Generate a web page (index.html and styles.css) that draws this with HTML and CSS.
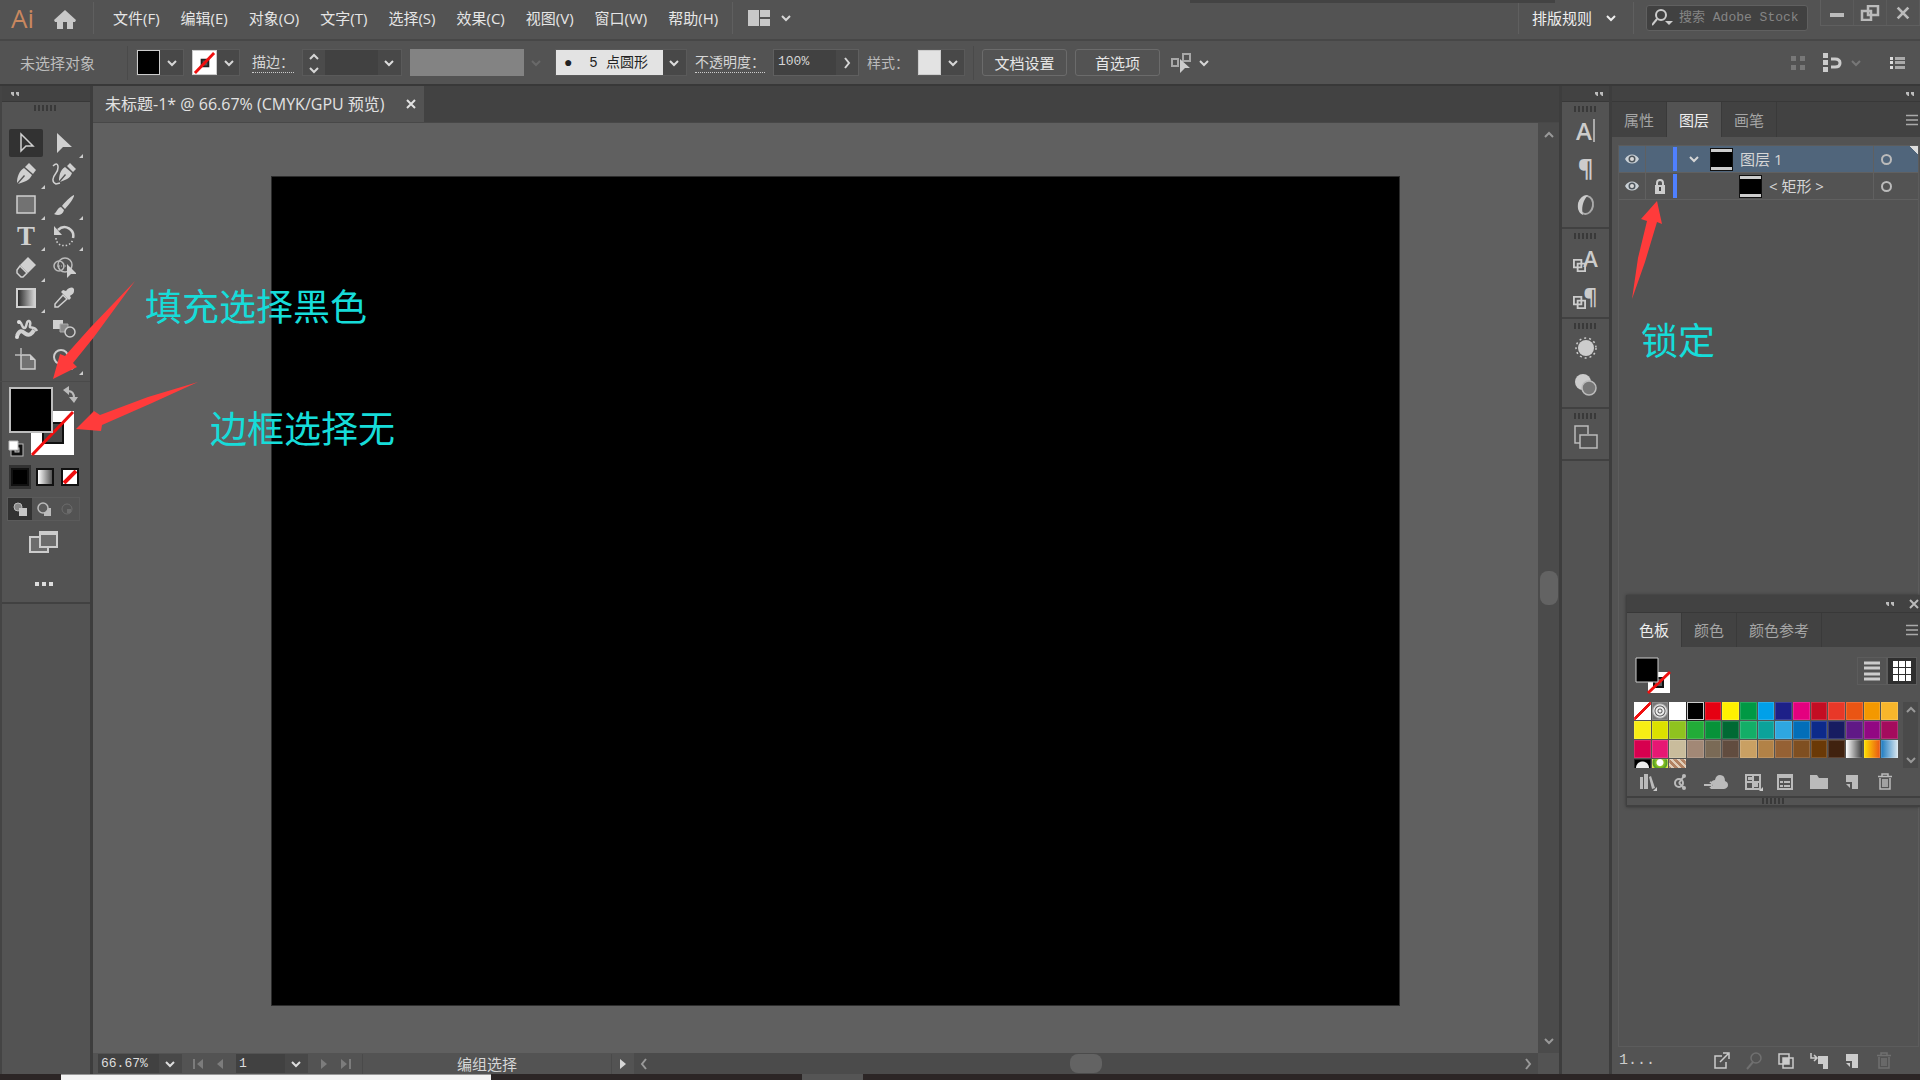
FILE: index.html
```html
<!DOCTYPE html>
<html lang="zh">
<head>
	<meta charset="UTF-8">
	<title>未标题-1</title>
	<link rel="stylesheet" href="styles.css">
</head>
<body>
	<svg class="defs" aria-hidden="true">
		<symbol id="down" viewBox="0 0 12 12"><path d="M2 4l4 4 4-4" fill="none" stroke="currentColor" stroke-width="2"/></symbol>
		<symbol id="up" viewBox="0 0 12 12"><path d="M2 8l4-4 4 4" fill="none" stroke="currentColor" stroke-width="2"/></symbol>
		<symbol id="right" viewBox="0 0 12 12"><path d="M4 1l4 5-4 5" fill="none" stroke="currentColor" stroke-width="2"/></symbol>
		<symbol id="left" viewBox="0 0 12 12"><path d="M8 1L4 6l4 5" fill="none" stroke="currentColor" stroke-width="2"/></symbol>
		<symbol id="close" viewBox="0 0 12 12"><path d="M2 2l8 8M10 2l-8 8" fill="none" stroke="currentColor" stroke-width="2"/></symbol>
		<symbol id="menu" viewBox="0 0 14 12"><path d="M1 1.500h12M1 6h12M1 10.500h12" fill="none" stroke="currentColor" stroke-width="1.500"/></symbol>
		<symbol id="grip" viewBox="0 0 24 6"><path d="M1 0v6M5 0v6M9 0v6M13 0v6M17 0v6M21 0v6" stroke="#393939" stroke-width="2"/></symbol>
		<symbol id="collapse" viewBox="0 0 8 6"><path d="M0 1h3v4H2L0 3zM5 1h3v4H7L5 3z" fill="currentColor"/></symbol>
		<symbol id="eye" viewBox="0 0 16 12"><path d="M1 6c3-6 11-6 14 0-3 6-11 6-14 0z" fill="#c9d0d6"/><circle cx="8" cy="6" r="3.500" fill="#4d555c"/><circle cx="8" cy="6" r="2" fill="#d8d8d8"/></symbol>
		<symbol id="trash" viewBox="0 0 16 18"><path d="M5 3V1h6v2M1 3.500h14M3 5v11h10V5M6 6v8M8 6v8M10 6v8" fill="none" stroke="currentColor" stroke-width="1.500"/></symbol>
		<symbol id="page" viewBox="0 0 16 18"><path d="M2 2h12v14H8V9H2z" fill="currentColor"/><path d="M2 11h4v4z" fill="currentColor"/></symbol>
		<symbol id="first" viewBox="0 0 12 12"><path d="M1 1h2v10H1zM11 1v10L5 6z" fill="currentColor"/></symbol>
		<symbol id="last" viewBox="0 0 12 12"><path d="M9 1h2v10H9zM1 1v10l6-5z" fill="currentColor"/></symbol>
		<symbol id="prev" viewBox="0 0 12 12"><path d="M9 1v10L3 6z" fill="currentColor"/></symbol>
		<symbol id="next" viewBox="0 0 12 12"><path d="M3 1v10l6-5z" fill="currentColor"/></symbol>
		<symbol id="none" viewBox="0 0 24 24"><path d="M0 0h24v24H0z" fill="#fff"/><path d="M9 9h7v7H9z" fill="#555" stroke="#222" stroke-width="2"/><path d="M2 23L22 2" stroke="#f00f0f" stroke-width="3"/></symbol>
		<symbol id="clone" viewBox="0 0 14 14"><path d="M1 1h8v8H1zM5 5h8v8H5z" fill="none" stroke="currentColor" stroke-width="2"/></symbol>
	</svg>

	<header class="titlebar">
		<a class="logo" href="#">Ai</a>
		<button class="home" aria-label="主页"><svg width="22" height="20" viewBox="0 0 22 20"><path d="M11 1L0 11l1 2h2v7h6v-7h4v7h6v-7h2l1-2z" fill="#c8c8c8"/></svg></button>
		<nav class="menus">
			<a href="#">文件(F)</a>
			<a href="#">编辑(E)</a>
			<a href="#">对象(O)</a>
			<a href="#">文字(T)</a>
			<a href="#">选择(S)</a>
			<a href="#">效果(C)</a>
			<a href="#">视图(V)</a>
			<a href="#">窗口(W)</a>
			<a href="#">帮助(H)</a>
		</nav>
		<button class="arrange" aria-label="排列文档">
			<svg width="22" height="16" viewBox="0 0 22 16"><path d="M0 0h11v16H0zM12 0h10v7H12zM12 9h10v7H12z" fill="#c8c8c8"/></svg>
			<svg class="chev"><use href="#down"/></svg>
		</button>
		<div class="shade"></div>
		<button class="workspace">排版规则 <svg class="chev"><use href="#down"/></svg></button>
		<label class="search">
			<svg width="21" height="20" viewBox="0 0 21 20"><circle cx="9" cy="7" r="5" fill="none" stroke="#ccc" stroke-width="2"/><path d="M5 11l-5 6" stroke="#ccc" stroke-width="2"/><path d="M13 13h8l-4 4z" fill="#ccc"/></svg>
			<input type="text" placeholder="搜索 Adobe Stock" aria-label="搜索 Adobe Stock">
		</label>
		<div class="window-btns">
			<button aria-label="最小化"><svg width="14" height="14" viewBox="0 0 14 14"><path d="M0 7h14v4H0z" fill="#bbb"/></svg></button>
			<button aria-label="还原"><svg width="20" height="16" viewBox="0 0 20 16"><path d="M8 1h10v9H8zM2 6h9v9H2z" fill="none" stroke="#bbb" stroke-width="2.500"/></svg></button>
			<button aria-label="关闭"><svg width="16" height="16"><use href="#close"/></svg></button>
		</div>
	</header>

	<div class="options">
		<span class="selection">未选择对象</span>
		<button class="drop" aria-label="填色"><span class="chip black"></span><svg class="chev"><use href="#down"/></svg></button>
		<button class="drop" aria-label="描边颜色"><svg class="chip"><use href="#none"/></svg><svg class="chev"><use href="#down"/></svg></button>
		<label class="dotted indent-label" for="weight">描边：</label>
		<div class="weight">
			<div class="spin">
				<button aria-label="增加"><svg class="chev"><use href="#up"/></svg></button>
				<button aria-label="减少"><svg class="chev"><use href="#down"/></svg></button>
			</div>
			<div class="pick"><select id="weight"><option></option></select><svg class="chev"><use href="#down"/></svg></div>
		</div>
		<div class="profile"><select aria-label="变量宽度配置文件" disabled><option></option></select><svg class="chev"><use href="#down"/></svg></div>
		<div class="pick brush"><select aria-label="画笔定义"><option>●&nbsp; 5 点圆形</option></select><svg class="chev"><use href="#down"/></svg></div>
		<label class="dotted" for="opacity">不透明度：</label>
		<div class="opacity"><input id="opacity" type="text" value="100%"><button aria-label="调整不透明度"><svg class="chev"><use href="#right"/></svg></button></div>
		<span class="label">样式：</span>
		<button class="drop" aria-label="样式"><span class="chip light"></span><svg class="chev"><use href="#down"/></svg></button>
		<span class="sep"></span>
		<button class="outline">文档设置</button>
		<button class="outline">首选项</button>
		<button class="plain" aria-label="选择类似的对象">
			<svg width="22" height="22" viewBox="0 0 22 22"><path d="M1 7h6v7H1zM12 2h7v7h-7z" fill="none" stroke="#a8a8a8" stroke-width="2"/><path d="M9 7l10 9h-5l-5 5z" fill="#ccc"/></svg>
			<svg class="chev"><use href="#down"/></svg>
		</button>
		<div class="options-right">
			<svg width="16" height="16" viewBox="0 0 16 16"><path d="M1 1h5v5H1zM10 1h5v5h-5zM1 10h5v5H1zM10 10h5v5h-5z" fill="#787878"/></svg>
			<button class="plain snap" aria-label="对齐">
				<svg width="20" height="20" viewBox="0 0 20 20"><path d="M1 0h5v5H1zM1 7h5v5H1zM1 14h5v5H1z" fill="#ccc"/><path d="M9 6h4q5 0 5 4t-5 4H9" fill="none" stroke="#ccc" stroke-width="3"/></svg>
				<svg class="chev off"><use href="#down"/></svg>
			</button>
			<button class="plain" aria-label="面板选项"><svg width="15" height="12" viewBox="0 0 15 12"><path d="M0 0h3v3H0zM0 4h3v3H0zM0 9h3v3H0z" fill="#ddd"/><path d="M5 0h10v3H5zM5 4h10v3H5zM5 9h10v3H5z" fill="#aaa"/></svg></button>
		</div>
	</div>

	<div class="main">
		<aside class="tools">
			<div class="bar left"><svg width="8" height="6"><use href="#collapse"/></svg></div>
			<div class="toolbox">
				<svg class="grip"><use href="#grip"/></svg>
				<div class="tool-grid">
					<button class="active" aria-label="选择工具"><svg viewBox="0 0 24 24"><path d="M7 3v17l5-5h7z" fill="none" stroke="#d0d0d0" stroke-width="1.500"/></svg></button>
					<button class="more" aria-label="直接选择工具"><svg viewBox="0 0 24 24"><path d="M5 2v20l6-6h9z" fill="#d0d0d0"/></svg></button>
					<button class="more" aria-label="钢笔工具"><svg viewBox="0 0 24 24"><path d="M15 1l7 7-3 4-8-7z" fill="#d0d0d0"/><path d="M10 6l8 7c-3 6-8 7-14 9l7-8-1-1-7 8C3 15 5 9 10 6z" fill="#d0d0d0"/></svg></button>
					<button aria-label="曲率工具"><svg viewBox="0 0 24 24"><path d="M18 1l6 6-3 3-6-6zM13 5l7 6c-2 6-7 7-12 9l6-7-1-1-6 7C7 14 8 8 13 5z" fill="#d0d0d0"/><path d="M1 4c6-6 6 3 3 7s-5 9 0 11l4-1" fill="none" stroke="#d0d0d0" stroke-width="1.500"/></svg></button>
					<button class="more" aria-label="矩形工具"><svg viewBox="0 0 24 24"><path d="M3 3h18v17H3z" fill="#727272" stroke="#d0d0d0" stroke-width="1.500"/></svg></button>
					<button class="more" aria-label="画笔工具"><svg viewBox="0 0 24 24"><path d="M22 2c-2 0-11 9-12 11l3 3c3-3 10-12 9-14zM9 14l3 3c-1 5-6 6-10 4 3-2 3-6 7-7z" fill="#d0d0d0"/></svg></button>
					<button class="more type" aria-label="文字工具">T</button>
					<button class="more" aria-label="旋转工具"><svg viewBox="0 0 24 24"><path d="M6 6c7-7 17 0 15 8" fill="none" stroke="#d0d0d0" stroke-width="2.500"/><path d="M2 2v9h8z" fill="#d0d0d0"/><path d="M4 14c0 10 15 10 17 1" fill="none" stroke="#d0d0d0" stroke-width="1.500" stroke-dasharray="1.500 2"/></svg></button>
					<button class="more" aria-label="橡皮擦工具"><svg viewBox="0 0 24 24"><path d="M14 2l8 8-8 8-8-8z" fill="#d0d0d0"/><path d="M6 11l7 7-4 4H7l-4-4v-3z" fill="none" stroke="#d0d0d0" stroke-width="1.500"/></svg></button>
					<button aria-label="形状生成器工具"><svg viewBox="0 0 24 24"><circle cx="7" cy="11" r="5" fill="none" stroke="#bbb" stroke-width="1.500"/><circle cx="13" cy="10" r="7" fill="none" stroke="#bbb" stroke-width="1.500"/><path d="M5 11h10" stroke="#bbb" stroke-dasharray="1 1"/><path d="M15 9v14l4-4h6z" fill="#d0d0d0"/></svg></button>
					<button class="more" aria-label="渐变工具"><svg viewBox="0 0 24 24"><defs><linearGradient id="g"><stop stop-color="#222"/><stop offset="1" stop-color="#d8d8d8"/></linearGradient></defs><path d="M3 3h18v18H3z" fill="url(#g)" stroke="#d0d0d0" stroke-width="2"/></svg></button>
					<button aria-label="吸管工具"><svg viewBox="0 0 24 24"><path d="M14 5c4-5 9-4 8 0 0 3-3 4-4 5l1 2-2 2-8-8 2-2z" fill="#d0d0d0"/><path d="M11 9l4 4-9 8H3v-3z" fill="none" stroke="#d0d0d0" stroke-width="1.500"/></svg></button>
					<button aria-label="操控变形工具"><svg viewBox="0 0 24 24"><path d="M4 6c4-3 3 4 6 5s2-8 5-7 0 5 1 6 5 0 7 4" fill="none" stroke="#d0d0d0" stroke-width="2.500"/><path d="M3 19c3-8 6-4 9-2s6 0 8-4" fill="none" stroke="#d0d0d0" stroke-width="4"/><circle cx="5" cy="5" r="2" fill="#ddd"/><circle cx="3" cy="20" r="2" fill="#ddd"/></svg></button>
					<button aria-label="混合工具"><svg viewBox="0 0 24 24"><path d="M1 3h10v9H1z" fill="#d0d0d0"/><path d="M8 7h8v8H8z" fill="#8a8a8a" stroke="#aaa"/><circle cx="18" cy="15" r="5" fill="#555" stroke="#ccc" stroke-width="1.500"/></svg></button>
					<button aria-label="画板工具"><svg viewBox="0 0 24 24"><path d="M7 0v6M1 7h6" stroke="#bbb" stroke-width="1.500"/><path d="M7 7h9l5 5v9H7z" fill="#727272" stroke="#ccc" stroke-width="1.500"/><path d="M16 7v5h5z" fill="#ccc"/></svg></button>
					<button class="more" aria-label="缩放工具"><svg viewBox="0 0 24 24"><circle cx="9" cy="9" r="7" fill="none" stroke="#ccc" stroke-width="2"/><path d="M14 14l7 7" stroke="#ccc" stroke-width="3"/></svg></button>
				</div>
				<div class="fill-stroke">
					<svg width="82" height="76" viewBox="0 0 82 76">
						<path d="M31 29h43v44H31zM43 41v20h20V41z" fill="#fff" fill-rule="evenodd"/>
						<path d="M43 41h20v20H43z" fill="#484848" stroke="#111" stroke-width="2"/>
						<path d="M32 73L73 30" stroke="#f00f0f" stroke-width="3"/>
						<path d="M10 6h42v44H10z" stroke="#bdbdbd" stroke-width="2"/>
						<path d="M68 9c4 0 6 2 6 7" fill="none" stroke="#bbb" stroke-width="2"/><path d="M69 4v9l-6-5zM69 15h9l-4 6z" fill="#bbb"/>
						<path d="M14 64h7v8h-8v-5" fill="none" stroke="#bbb" stroke-width="5"/><path d="M14 64h7v8h-8v-5" fill="none" stroke="#111" stroke-width="3"/><path d="M9 59h9v9H9z" fill="#fff" stroke="#bbb"/>
					</svg>
				</div>
				<div class="color-modes">
					<button aria-label="颜色" class="active"><span class="solid"></span></button>
					<button aria-label="渐变"><span class="grad"></span></button>
					<button aria-label="无"><svg width="14" height="14" viewBox="0 0 14 14"><path d="M0 0h14v14H0z" fill="#fff"/><path d="M1 13L13 1" stroke="#f00f0f" stroke-width="4"/></svg></button>
				</div>
				<div class="draw-modes">
					<button aria-label="正常绘图" class="active"><svg width="14" height="14" viewBox="0 0 14 14"><circle cx="5" cy="5" r="4" fill="#888" stroke="#bbb"/><path d="M6 6h8v8H6z" fill="#c5c5c5"/></svg></button>
					<button aria-label="背面绘图"><svg width="14" height="14" viewBox="0 0 14 14"><path d="M7 6h7v8H7z" fill="#bbb"/><circle cx="6" cy="6" r="5" fill="#5c5c5c" stroke="#bbb" stroke-width="1.500"/></svg></button>
					<button aria-label="内部绘图" disabled><svg width="14" height="14" viewBox="0 0 14 14"><circle cx="7" cy="7" r="5" fill="none" stroke="#6c6c6c"/><path d="M7 7h4v4H7z" fill="#6c6c6c"/></svg></button>
				</div>
				<button class="screen" aria-label="更改屏幕模式"><svg width="30" height="22" viewBox="0 0 30 22"><path d="M1 6h18v15H1z" fill="#6c6c6c" stroke="#ccc" stroke-width="2"/><path d="M11 1h17v15H11z" fill="#6c6c6c" stroke="#ccc" stroke-width="2"/><path d="M11 3h17" stroke="#ccc" stroke-width="2"/></svg></button>
				<button class="screen" aria-label="编辑工具栏"><svg width="18" height="6" viewBox="0 0 18 6"><path d="M0 1h4v4H0zM7 1h4v4H7zM14 1h4v4h-4z" fill="#ddd"/></svg></button>
			</div>
		</aside>

		<section class="document">
			<div class="doc-tabs">
				<div class="doc-tab"><span>未标题-1* @ 66.67% (CMYK/GPU 预览)</span><button class="plain" aria-label="关闭文档"><svg width="12" height="12"><use href="#close"/></svg></button></div>
			</div>
			<div class="view">
				<div class="canvas"><div class="artboard"></div></div>
				<div class="vscroll"><svg class="chev"><use href="#up"/></svg><span class="thumb"></span><svg class="chev"><use href="#down"/></svg></div>
			</div>
			<div class="status">
				<div class="pick zoom"><select aria-label="缩放"><option>66.67%</option></select><svg class="chev"><use href="#down"/></svg></div>
				<div class="pager"><button disabled aria-label="首项"><svg class="chev"><use href="#first"/></svg></button><button disabled aria-label="上一项"><svg class="chev"><use href="#prev"/></svg></button></div>
				<div class="pick board"><select aria-label="画板"><option>1</option></select><svg class="chev"><use href="#down"/></svg></div>
				<div class="pager"><button disabled aria-label="下一项"><svg class="chev"><use href="#next"/></svg></button><button disabled aria-label="末项"><svg class="chev"><use href="#last"/></svg></button></div>
				<span class="current">编组选择</span>
				<button class="plain play" aria-label="显示"><svg class="chev"><use href="#next"/></svg></button>
				<div class="hscroll"><svg class="chev"><use href="#left"/></svg><span class="thumb"></span><svg class="chev"><use href="#right"/></svg></div>
			</div>
		</section>

		<aside class="dock">
			<div class="bar"><svg width="8" height="6"><use href="#collapse"/></svg></div>
			<div class="dock-group">
				<svg class="grip"><use href="#grip"/></svg>
				<button class="char" aria-label="字符">A<i></i></button>
				<button class="para" aria-label="段落">¶</button>
				<button aria-label="OpenType"><svg width="20" height="24" viewBox="0 0 20 24"><ellipse cx="10" cy="12" rx="7" ry="9" fill="none" stroke="#aaa" stroke-width="2" transform="rotate(10 10 12)"/><path d="M12 2C0 3-1 19 7 22c-2-6 0-15 5-20z" fill="#ccc"/></svg></button>
			</div>
			<div class="dock-group">
				<svg class="grip"><use href="#grip"/></svg>
				<button class="styled" aria-label="字符样式"><svg width="13" height="13"><use href="#clone"/></svg>A</button>
				<button class="styled" aria-label="段落样式"><svg width="13" height="13"><use href="#clone"/></svg>¶</button>
			</div>
			<div class="dock-group">
				<svg class="grip"><use href="#grip"/></svg>
				<button aria-label="外观"><svg width="24" height="24" viewBox="0 0 24 24"><circle cx="12" cy="12" r="8" fill="#ccc"/><circle cx="12" cy="12" r="10" fill="none" stroke="#ccc" stroke-width="1.500" stroke-dasharray="2 3"/></svg></button>
				<button aria-label="图形样式"><svg width="24" height="24" viewBox="0 0 24 24"><circle cx="9" cy="9" r="8" fill="#ccc"/><circle cx="15" cy="15" r="7" fill="#777" stroke="#bbb" stroke-width="1.500"/></svg></button>
			</div>
			<div class="dock-group">
				<svg class="grip"><use href="#grip"/></svg>
				<button class="tall" aria-label="画板"><svg width="24" height="26" viewBox="0 0 24 26"><path d="M6 19H1V2h13v8M6 11h17v13H6z" fill="none" stroke="#bbb" stroke-width="1.500"/></svg></button>
			</div>
		</aside>

		<aside class="panels">
			<div class="bar"><svg width="8" height="6"><use href="#collapse"/></svg></div>
			<div class="tabs">
				<button>属性</button>
				<button class="active">图层</button>
				<button>画笔</button>
				<svg class="tabs-menu"><use href="#menu"/></svg>
			</div>
			<div class="layers">
				<div class="layer selected">
					<svg class="eye"><use href="#eye"/></svg>
					<span class="lock"></span>
					<span class="color"></span>
					<button class="plain open" aria-label="展开"><svg class="chev"><use href="#down"/></svg></button>
					<span class="thumbnail"></span>
					<span class="name">图层 1</span>
					<span class="target"></span>
				</div>
				<div class="layer">
					<svg class="eye"><use href="#eye"/></svg>
					<span class="lock"><svg width="12" height="15" viewBox="0 0 12 15"><path d="M3 7V4q0-3 3-3t3 3v3" fill="none" stroke="#ccc" stroke-width="2"/><path d="M1 6h10v9H1z" fill="#ccc"/><path d="M5 8h2v4H5z" fill="#444"/></svg></span>
					<span class="color"></span>
					<span class="open indent"></span>
					<span class="thumbnail"></span>
					<span class="name">&lt; 矩形 &gt;</span>
					<span class="target"></span>
				</div>
			</div>
			<div class="layer-foot">
				<span>1...</span>
				<button aria-label="收集以导出"><svg width="16" height="18" viewBox="0 0 16 18"><path d="M8 4H1v12h11v-6M6 10l8-8M9 1h6v6" fill="none" stroke="currentColor" stroke-width="1.500"/></svg></button>
				<button disabled aria-label="定位对象"><svg width="16" height="18" viewBox="0 0 16 18"><circle cx="10" cy="6" r="5" fill="none" stroke="currentColor" stroke-width="1.500"/><path d="M7 10l-6 7" stroke="currentColor" stroke-width="2"/></svg></button>
				<button aria-label="建立剪切蒙版"><svg width="16" height="18" viewBox="0 0 16 18"><path d="M1 2h10v10H1zM5 6h10v10H5z" fill="none" stroke="currentColor" stroke-width="1.500"/><path d="M5 6h6v6H5z" fill="currentColor"/></svg></button>
				<button aria-label="创建新子图层"><svg width="18" height="18" viewBox="0 0 18 18"><path d="M1 1v5h6M4 3l3 3-3 3" fill="none" stroke="currentColor" stroke-width="1.500"/><path d="M8 4h10v13h-5v-5H8z" fill="currentColor"/></svg></button>
				<button aria-label="创建新图层"><svg width="16" height="18"><use href="#page"/></svg></button>
				<button disabled aria-label="删除"><svg width="16" height="18"><use href="#trash"/></svg></button>
			</div>

			<div class="swatch-panel">
				<div class="swatch-head"><svg width="8" height="6"><use href="#collapse"/></svg><button class="plain" aria-label="关闭"><svg width="12" height="12"><use href="#close"/></svg></button></div>
				<div class="tabs">
					<button class="active">色板</button>
					<button>颜色</button>
					<button>颜色参考</button>
					<svg class="tabs-menu"><use href="#menu"/></svg>
				</div>
				<div class="swatch-top">
					<svg width="36" height="38" viewBox="0 0 36 38"><path d="M13 15h22v21H13z" fill="#fff"/><path d="M19 21h9v9h-9z" fill="#555" stroke="#111" stroke-width="2"/><path d="M13 36L35 15" stroke="#f00f0f" stroke-width="3"/><path d="M1 1h22v24H1z" stroke="#ccc"/></svg>
					<button class="view-btn" aria-label="列表视图"><svg width="16" height="20" viewBox="0 0 16 20"><path d="M0 2h16M0 7h16M0 13h16M0 18h16" stroke="#ccc" stroke-width="3"/></svg></button>
					<button class="view-btn active" aria-label="缩览图视图"><svg width="18" height="20" viewBox="0 0 18 20"><path d="M0 0h5v6H0zM6 0h6v6H6zM13 0h5v6h-5zM0 7h5v6H0zM6 7h6v6H6zM13 7h5v6h-5zM0 14h5v6H0zM6 14h6v6H6zM13 14h5v6h-5z" fill="#fff"/></svg></button>
				</div>
				<div class="swatch-body">
					<div class="swatches" id="swatches"></div>
					<div class="swatch-scroll"><svg class="chev"><use href="#up"/></svg><svg class="chev"><use href="#down"/></svg></div>
				</div>
				<div class="swatch-foot">
					<button class="more" aria-label="色板库"><svg width="16" height="16" viewBox="0 0 16 16"><path d="M1 3h3v12H1zM5 0h4v15H5zM10 3l2-1 4 12-3 1z" fill="currentColor"/></svg></button>
					<button aria-label="颜色主题"><svg width="16" height="16" viewBox="0 0 16 16"><circle cx="7" cy="9" r="4" fill="none" stroke="currentColor" stroke-width="2"/><path d="M7 9l5-7M7 9l5 5" stroke="currentColor" stroke-width="2"/><circle cx="12" cy="2" r="2" fill="currentColor"/><circle cx="12" cy="14" r="2" fill="currentColor"/></svg></button>
					<button aria-label="添加到库"><svg width="24" height="16" viewBox="0 0 24 16"><path d="M7 15V8q2-2 4-2 1-5 5-5 5 0 5 6 3 1 3 4t-4 4z" fill="currentColor"/><path d="M0 11h8M6 8l4 3-4 3" stroke="currentColor" stroke-width="2"/></svg></button>
					<button class="more" aria-label="色板类型"><svg width="16" height="16" viewBox="0 0 16 16"><path d="M1 1h14v14H1zM8 1v14M1 8h14" fill="none" stroke="currentColor" stroke-width="2"/><path d="M3 3h4v3H3zM9 9h4v4H9z" fill="currentColor"/></svg></button>
					<button aria-label="色板选项"><svg width="16" height="16" viewBox="0 0 16 16"><path d="M1 1h14v14H1zM1 3h14" fill="none" stroke="currentColor" stroke-width="2"/><path d="M3 7h3v2H3zM7 7h6v2H7zM3 11h3v2H3zM7 11h6v2H7z" fill="currentColor"/></svg></button>
					<button aria-label="新建颜色组"><svg width="18" height="16" viewBox="0 0 18 16"><path d="M0 1h7l2 3h9v11H0z" fill="currentColor"/></svg></button>
					<button aria-label="新建色板"><svg width="16" height="18"><use href="#page"/></svg></button>
					<button aria-label="删除色板"><svg width="16" height="18"><use href="#trash"/></svg></button>
				</div>
				<div class="swatch-grip"><svg class="grip"><use href="#grip"/></svg></div>
			</div>
		</aside>
	</div>

	<footer class="taskbar"><span class="task-window"></span><span class="task-item"></span></footer>

	<!-- 标注 -->
	<p class="note note-fill">填充选择黑色</p>
	<p class="note note-stroke">边框选择无</p>
	<p class="note note-lock">锁定</p>
	<svg class="arrow arrow-fill" width="84" height="100" viewBox="52 280 84 100"><path d="M53 379l7-25 5 2 25-28 45-47-41 56-21 26 4 4z"/></svg>
	<svg class="arrow arrow-stroke" width="124" height="52" viewBox="75 381 124 52"><path d="M76 429l18-18 6 4 48-18 50-15-46 21-50 22-1 6z"/></svg>
	<svg class="arrow arrow-lock" width="32" height="100" viewBox="1631 200 32 100"><path d="M1657 201l-16 18 6 2-9 37-6 41 13-37 12-40 5 2z"/></svg>

	<script>
		var colors = [
			'none', 'registration', '#fff', '#000', '#e60012', '#fff100', '#009944', '#00a0e9', '#1d2088', '#e4007f', '#c30d23', '#e83828', '#ea5514', '#f39800', '#f8b62b',
			'#f7ee15', '#dbe000', '#8fc31f', '#22ac38', '#079239', '#006934', '#13ae67', '#0ba29a', '#2ea7e0', '#036eb8', '#0d2a8a', '#171c61', '#601986', '#920783', '#a40b5d',
			'#d7004f', '#e71773', '#c9bc9c', '#a28876', '#7a6a56', '#614c3f', '#c9a063', '#b28247', '#956134', '#7f4f21', '#6a3906', '#40220f', 'fade', 'sunset', 'sky',
			'dome', 'leaf', 'stone'
		];
		var box = document.getElementById('swatches');

		for (var i = 0; i < colors.length; i++) {
			var item = document.createElement('button');
			item.setAttribute('aria-label', '色板 ' + (i + 1));
			if (colors[i].charAt(0) === '#') {
				item.style.background = colors[i];
			} else {
				item.className = 'sw-' + colors[i];
			}
			box.appendChild(item);
		}
	</script>
</body>
</html>
```
FILE: styles.css
```css
*, *::before { margin: 0; padding: 0; box-sizing: border-box; }
body {
	display: flex;
	flex-direction: column;
	height: 100vh;
	overflow: hidden;
	position: relative;
	background: #535353;
	color: #d6d6d6;
	font: 15px/20px "Open Sans", "Noto Sans CJK SC", sans-serif;
}
button, input, select {
	font: inherit;
	color: inherit;
	background: none;
	border: none;
	border-radius: 0;
	outline: none;
	appearance: none;
	min-width: 0;
}
button {
	display: flex;
	align-items: center;
	justify-content: center;
}
a { color: inherit; text-decoration: none; }
svg { flex: none; }
.defs { display: none; }
.chev { width: 12px; height: 12px; }
.off { color: #777; }
.grip { display: block; width: 24px; height: 6px; margin: 0 auto; }

/* title bar */
.titlebar {
	display: flex;
	align-items: center;
	height: 41px;
	padding-bottom: 3px;
	border-bottom: 2px solid #474747;
	position: relative;
}
.logo {
	width: 44px;
	padding-left: 11px;
	color: #c9885f;
	font-size: 26px;
	line-height: 32px;
}
.home { width: 50px; height: 32px; border-right: 1px solid #5f5f5f; justify-content: flex-start; padding: 2px 0 0 10px; }
.menus {
	display: flex;
	gap: 21px;
	padding: 0 14px 0 19px;
	color: #e6e6e6;
}
.arrange { gap: 10px; height: 32px; padding-left: 15px; border-left: 1px solid #5f5f5f; }
.shade {
	position: absolute;
	top: 0;
	left: 62%;
	width: 19%;
	height: 3px;
	background: #434343;
}
.workspace {
	gap: 13px;
	height: 32px;
	margin-left: auto;
	padding: 0 16px 0 13px;
	border: solid #5f5f5f;
	border-width: 0 1px;
	color: #eee;
}
.search {
	display: flex;
	align-items: center;
	gap: 6px;
	width: 162px;
	height: 26px;
	margin: 0 12px;
	padding-left: 5px;
	background: #414141;
	border: 1px solid #606060;
	border-radius: 3px;
}
.search input { width: 126px; font: 13px/20px "Liberation Mono", "Noto Sans CJK SC", monospace; }
.search input::placeholder { color: #858585; opacity: 1; }
.window-btns {
	display: flex;
	align-self: flex-start;
	height: 26px;
	border: solid #5f5f5f;
	border-width: 0 0 1px 1px;
	color: #bbb;
}
.window-btns button { width: 33px; border-right: 1px solid #5b5b5b; }

/* options bar */
.options {
	display: flex;
	align-items: center;
	gap: 8px;
	height: 45px;
	padding-left: 20px;
	border-bottom: 2px solid #383838;
}
.selection {
	width: 108px;
	line-height: 34px;
	border-right: 1px solid #4a4a4a;
	color: #bdbdbd;
}
.drop { width: 48px; height: 27px; background: #484848; border: 1px solid #5a5a5a; }
.drop > .chev { margin: 0 5px 0 6px; }
.chip { width: 25px; height: 25px; border: 1px solid #ccc; }
.black { background: #000; }
.light { background: #e3e3e3; }
.label, .dotted { font-size: 14px; white-space: nowrap; }
.label { color: #bbb; }
.dotted { border-bottom: 1px dotted #ccc; }
.indent-label { margin-left: 4px; }
.weight { display: flex; width: 100px; height: 27px; border: 1px solid #5a5a5a; }
.spin { width: 22px; background: #4b4b4b; }
.spin button { width: 22px; height: 13px; }
.pick {
	display: flex;
	flex: 1;
	align-items: center;
	gap: 5px;
	padding-right: 6px;
	background: #484848;
	color: #ddd;
}
.pick select { flex: 1; height: 100%; background: #414141; font: 14px/20px "Liberation Mono", "Noto Sans CJK SC", monospace; }
.profile { display: flex; align-items: center; gap: 6px; width: 137px; height: 27px; color: #696969; }
.profile select { width: 114px; height: 27px; background: #838383; opacity: 1; }
.brush { flex: none; width: 132px; height: 27px; border: 1px solid #5a5a5a; }
.brush select { padding-left: 8px; background: #e3e3e3; color: #222; }
.opacity { display: flex; width: 86px; height: 27px; border: 1px solid #5f5f5f; }
.opacity input { width: 63px; padding: 0 4px 2px; background: #414141; font: 13px/20px "Liberation Mono", monospace; }
.opacity button { width: 22px; background: #484848; }
.sep { width: 1px; height: 34px; background: #4a4a4a; }
.outline { width: 85px; height: 27px; border: 1px solid #6b6b6b; border-radius: 3px; color: #e6e6e6; }
.plain { gap: 5px; }
.options > .plain { margin-left: 3px; }
.options-right { display: flex; align-items: center; gap: 16px; margin-left: auto; padding-right: 15px; }
.snap { gap: 8px; margin-right: 12px; }

/* layout */
.main { display: flex; flex: 1; min-height: 0; background: #3d3d3d; }
.bar {
	display: flex;
	align-items: center;
	justify-content: flex-end;
	height: 16px;
	padding: 0 6px;
	background: #424242;
	border-bottom: 1px solid #383838;
	color: #bbb;
}
.bar.left { justify-content: flex-start; padding-left: 9px; }

/* tools */
.tools { width: 90px; margin-right: 3px; background: #535353; border-left: 2px solid #444; }
.toolbox { height: 502px; padding-top: 3px; border-bottom: 2px solid #414141; }
.tool-grid {
	display: grid;
	grid-template-columns: 34px 34px;
	grid-auto-rows: 28px;
	gap: 3px 4px;
	padding: 18px 7px 7px;
}
.tool-grid button { position: relative; border-radius: 2px; }
.tool-grid svg { width: 24px; height: 24px; }
.tool-grid .active, .draw-modes .active, .color-modes .active { background: #323232; }
.more { position: relative; }
.more::after {
	content: "";
	position: absolute;
	right: -2px;
	bottom: -1px;
	border: solid transparent;
	border-width: 4px 0 0 4px;
	border-right: 0;
	border-bottom: 4px solid #ccc;
}
.tool-grid .type { font: bold 27px/28px "Liberation Serif", serif; color: #d0d0d0; }
.fill-stroke { height: 84px; margin-left: -2px; border-top: 1px solid #4a4a4a; }
.color-modes, .draw-modes { display: flex; gap: 3px; margin: 0 7px 8px; }
.color-modes button { width: 22px; height: 24px; }
.color-modes span, .color-modes svg { width: 18px; height: 18px; border: 2px solid #111; }
.solid { background: #000; }
.grad { background: linear-gradient(90deg, #fff, #555); }
.draw-modes { gap: 0; width: 73px; margin: 0 5px; border: 1px solid #5b5b5b; }
.draw-modes button { flex: 1; height: 22px; }
.screen { width: 84px; height: 42px; }

/* document */
.document { display: flex; flex: 1; flex-direction: column; min-width: 0; }
.doc-tabs { display: flex; height: 37px; background: #424242; border-bottom: 1px solid #484848; }
.doc-tab {
	display: flex;
	align-items: center;
	gap: 20px;
	padding: 0 7px 0 12px;
	background: #535353;
	color: #e2e2e2;
	font-size: 16px;
	white-space: nowrap;
}
.view { display: flex; flex: 1; min-height: 0; }
.canvas { flex: 1; padding: 53px 138px 47px 178px; background: #606060; }
.artboard { height: 100%; background: #000; border: 1px solid #2c2c2c; }
.vscroll {
	display: flex;
	flex-direction: column;
	align-items: center;
	justify-content: space-between;
	width: 21px;
	padding: 6px 0;
	background: #4b4b4b;
	color: #999;
}
.thumb { width: 18px; height: 34px; border-radius: 8px; background: #636363; }
.status { display: flex; align-items: center; height: 21px; padding-left: 5px; background: #535353; }
.status .pick { flex: none; height: 19px; }
.status .pick select { padding: 0 3px; font-size: 13px; }
.zoom { width: 84px; }
.board { width: 72px; }
.pager { display: flex; justify-content: center; gap: 10px; width: 54px; color: #7c7c7c; }
.current {
	width: 250px;
	text-align: center;
	line-height: 20px;
	border: solid #4a4a4a;
	border-width: 0 1px;
}
.play { width: 22px; }
.hscroll {
	display: flex;
	flex: 1;
	align-items: center;
	justify-content: space-between;
	height: 21px;
	margin-right: 21px;
	padding: 0 4px;
	background: #4b4b4b;
	color: #999;
}
.hscroll .thumb { width: 32px; height: 19px; }

/* icon dock */
.dock { width: 47px; margin: 0 3px 0 3px; background: #535353; }
.dock-group { padding: 4px 0; border-bottom: 2px solid #414141; color: #ccc; }
.dock-group button { width: 47px; height: 37px; }
.dock-group .tall { height: 36px; }
.char, .para, .styled { font: bold 24px/30px "Open Sans", sans-serif; }
.dock-group button.char { font-weight: 600; }
.char i { width: 2px; height: 23px; margin-left: 1px; background: #aaa; }
.dock-group button.styled { font-size: 22px; font-weight: 600; }
.styled svg { align-self: flex-end; margin: 0 -3px 4px 0; }

/* panels */
.panels { display: flex; flex-direction: column; width: 308px; background: #535353; position: relative; }
.tabs { display: flex; align-items: stretch; height: 35px; background: #424242; font-size: 15px; }
.tabs button { padding: 0 12px; border-right: 1px solid #3a3a3a; color: #a5a5a5; }
.tabs button.active { background: #535353; color: #eee; }
.tabs-menu { align-self: center; width: 14px; height: 12px; margin: 0 1px 0 auto; color: #aaa; }
.layers { flex: 1; margin: 8px 1px 0 6px; border: 1px solid #5c5c5c; }
.layer { display: flex; align-items: center; height: 27px; border-bottom: 1px solid #606060; }
.layer.selected { background: #50657b; }
.eye { width: 16px; height: 12px; margin: 0 5px; }
.lock { display: flex; align-items: center; justify-content: center; width: 28px; height: 26px; border-left: 1px solid #606060; }
.color { width: 4px; height: 24px; background: #4f80ff; }
.open { width: 32px; margin-left: 1px; }
.open.indent { width: 61px; }
.thumbnail { width: 23px; height: 23px; border: 1px solid #111; background: linear-gradient(#ccc 3px, #000 3px, #000 18px, #ccc 18px); }
.name { flex: 1; margin-left: 7px; line-height: 26px; }
.target { display: flex; align-items: center; width: 45px; height: 26px; padding-left: 7px; border-left: 1px solid #606060; }
.target::before { content: ""; width: 11px; height: 11px; border: 2px solid #bbb; border-radius: 50%; }
.selected .target { background: linear-gradient(225deg, #ddd 6px, transparent 6px); }
.layer-foot { display: flex; align-items: center; gap: 16px; height: 27px; padding: 0 28px 0 7px; color: #ccc; }
.layer-foot span { margin-right: auto; font-family: "Liberation Mono", monospace; }
.layer-foot button:disabled { color: #707070; }

/* swatches */
.swatch-panel {
	position: absolute;
	top: 509px;
	left: 14px;
	right: 0;
	background: #535353;
	border: solid #404040;
	border-width: 0 0 2px 1px;
	box-shadow: 0 0 3px #333;
}
.swatch-head { display: flex; align-items: center; justify-content: flex-end; gap: 14px; height: 18px; background: #424242; border-bottom: 1px solid #383838; color: #bbb; }
.swatch-panel .tabs { height: 34px; }
.swatch-top { display: flex; align-items: flex-start; height: 55px; padding: 10px 3px 0 8px; }
.view-btn { width: 30px; height: 28px; border: 1px solid #5c5c5c; }
.swatch-top > svg { margin-right: auto; }
.view-btn.active { background: #2f2f2f; }
.swatch-body { display: flex; gap: 5px; height: 66px; padding-left: 7px; }
.swatches {
	display: grid;
	grid-template-columns: repeat(15, 1fr);
	grid-auto-rows: 18px;
	gap: 1px;
	width: 264px;
	overflow: hidden;
}
.swatches button { border: 1px solid rgba(255, 255, 255, .15); background-origin: border-box; }
.swatches button:nth-child(4) { border: 1px solid #ccc; outline: 1px solid #222; }
.swatches .sw-none { background: linear-gradient(135deg, #fff 44%, #f00f0f 44%, #f00f0f 56%, #fff 56%) border-box; }
.swatches .sw-registration { background: radial-gradient(circle, #eee 1px, #555 2px, #eee 3px, #eee 4px, #555 5px, #eee 6px, #777 8px) border-box; }
.swatches .sw-fade { background: linear-gradient(90deg, #fff, #333) border-box; }
.swatches .sw-sunset { background: linear-gradient(90deg, #ffe100, #ea5514) border-box; }
.swatches .sw-sky { background: linear-gradient(90deg, #1b7ac0, #dce8f0) border-box; }
.swatches .sw-dome { background: radial-gradient(circle at 50% 50%, #eee 6px, #000 7px) border-box; }
.swatches .sw-leaf { background: radial-gradient(circle at 50% 20%, #fff 3px, #8fc31f 4px, #4b9a2a 7px, #d9e23a 8px) border-box; }
.swatches .sw-stone { background: repeating-linear-gradient(45deg, #b28262 0 3px, #e0cdb8 3px 5px) border-box; }
.swatch-scroll { display: flex; flex-direction: column; align-items: center; justify-content: space-between; width: 15px; padding: 2px 0; background: #4a4a4a; color: #999; }
.swatch-foot { display: flex; align-items: center; justify-content: space-between; height: 28px; padding: 0 27px 0 12px; color: #bbb; }
.swatch-grip { padding-bottom: 1px; border-top: 2px solid #404040; }

/* taskbar */
.taskbar { display: flex; height: 6px; background: #2c2626; }
.task-window { width: 430px; margin-left: 61px; background: #f4f4f4; border-top: 1px solid #999; }
.task-item { width: 61px; margin-left: 311px; background: #555; }

/* notes over the workspace */
.note { position: absolute; color: #16dcd9; font: 37px/48px "Noto Sans CJK SC", sans-serif; white-space: nowrap; }
.note-fill { left: 145px; top: 281px; }
.note-stroke { left: 210px; top: 403px; }
.note-lock { right: 205px; top: 315px; }
.arrow { position: absolute; fill: #ff3b3b; }
.arrow-fill { left: 52px; top: 280px; }
.arrow-stroke { left: 75px; top: 381px; }
.arrow-lock { right: 257px; top: 200px; }
```
